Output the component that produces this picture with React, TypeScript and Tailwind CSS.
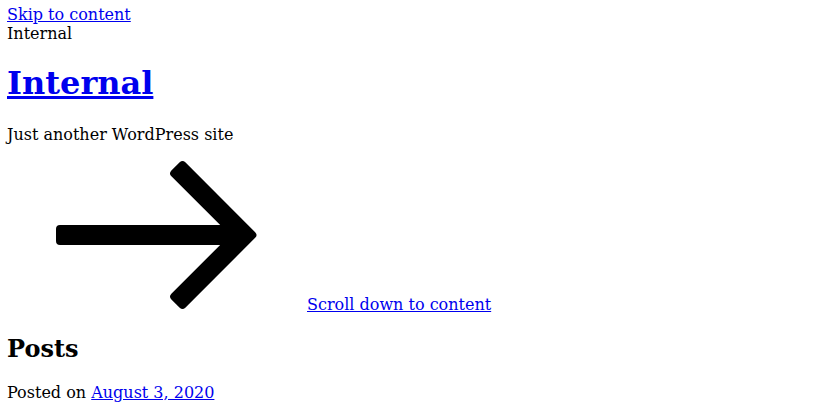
export default function App() {
  return (
    <div className="pl-[7px] pr-2 pt-[5px] pb-2 font-['DejaVu_Serif',serif] text-base leading-[normal] text-black bg-white min-h-[412px]">
      <div>
        <a href="#content" className="text-[#0000ee] underline">Skip to content</a>
      </div>
      <div>Internal</div>
      <h1 className="text-[32px] font-bold mt-[21.44px] mb-[22.44px] leading-[normal]">
        <a href="#" className="text-[#0000ee] underline">Internal</a>
      </h1>
      <p className="my-4">Just another WordPress site</p>
      <div>
        <a href="#content" className="text-[#0000ee] underline">
          <svg
            className="inline-block align-baseline"
            width="300"
            height="150"
            viewBox="0 0 300 150"
            aria-hidden="true"
          >
            <polygon
              fill="#000"
              stroke="#000"
              strokeWidth="8"
              strokeLinejoin="round"
              points="53,69 222.76,69 167.21,13.45 175.5,5.16 245.34,75 175.5,144.84 167.21,136.55 222.76,81 53,81"
            />
          </svg>
          <span>Scroll down to content</span>
        </a>
      </div>
      <h2 className="text-[24px] font-bold my-[19.92px] leading-[normal]">Posts</h2>
      <p className="my-4">
        Posted on <a href="#" className="text-[#0000ee] underline">August 3, 2020</a>
      </p>
    </div>
  );
}
